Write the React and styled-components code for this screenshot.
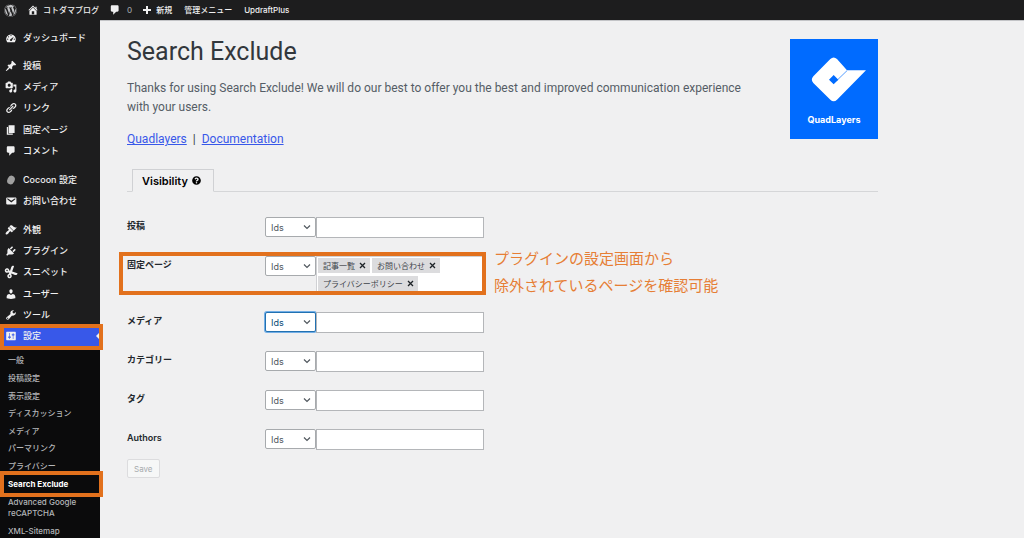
import { useState } from "react";
import styled, { createGlobalStyle } from "styled-components";
import { FaWordpress, FaCut, FaQuestionCircle } from "react-icons/fa";

const GlobalStyle = createGlobalStyle`
  * {
    box-sizing: border-box;
  }
  body {
    margin: 0;
    background-color: #f0f0f1;
    color: #3c434a;
    font-family: Inter, "Noto Sans CJK JP", sans-serif;
    overflow: hidden;
  }
`;

const Page = styled.div`
  width: 100%;
  height: 100vh;
  display: flex;
  flex-direction: column;
`;

const AdminBar = styled.nav`
  flex: none;
  height: 20px;
  display: flex;
  align-items: center;
  gap: 10px;
  padding: 0 4px;
  background-color: #1d1d1e;
`;

const BarLink = styled.a`
  display: flex;
  align-items: center;
  gap: 4px;
  padding-left: ${({ $plain }) => ($plain ? 2 : 0)}px;
  color: #f0f0f1;
  font-size: 8px;
  font-weight: 500;
  line-height: 12px;
  text-decoration: none;
  white-space: nowrap;
`;

const BarCount = styled.span`
  padding-left: 2px;
  color: #9a9ca0;
`;

const Body = styled.div`
  flex: 1;
  min-height: 0;
  display: flex;
`;

const SideBar = styled.nav`
  flex: none;
  width: 100px;
  display: flex;
  flex-direction: column;
  gap: 7px;
  padding-top: 7px;
  background-color: #1d1d1e;
`;

const MenuGroup = styled.div`
  flex: none;
  display: grid;
  grid-auto-rows: 1fr;
  min-height: ${({ $height }) => $height}px;
`;

const MenuLink = styled.a`
  position: relative;
  display: flex;
  align-items: center;
  gap: 6px;
  padding-left: 5px;
  background-color: ${({ $current }) => ($current ? "#3858e9" : "transparent")};
  color: #f0f0f1;
  font-size: 9px;
  font-weight: 500;
  line-height: 12px;
  text-decoration: none;
  white-space: nowrap;
`;

const CurrentArrow = styled.span`
  position: absolute;
  right: 0;
  border: 4px solid transparent;
  border-right-color: #f0f0f1;
`;

/* オレンジの強調枠 */
const Marker = styled.span`
  position: absolute;
  z-index: 2;
  border: 4px solid #e2711d;
  pointer-events: none;
`;

const MenuMarker = styled(Marker)`
  inset: -2px -3px -3px 0;
`;

const SubMarker = styled(Marker)`
  inset: -4px -3px -4px 0;
`;

const RowMarker = styled(Marker)`
  inset: 5px -2px 8px -8px;
`;

const SubMenu = styled.div`
  flex: 1;
  margin-top: -7px;
  padding-top: 5px;
  background-color: #0b0b0c;
`;

const SubLink = styled.a`
  position: relative;
  display: flex;
  align-items: center;
  padding: 0 8px;
  color: ${({ $current }) => ($current ? "#ffffff" : "#b4b6b9")};
  font-size: 8px;
  font-weight: ${({ $current }) => ($current ? 700 : 500)};
  line-height: 11px;
  text-decoration: none;
`;

const SubTail = styled.div`
  display: grid;
  gap: 7px;
  padding-top: 4px;
`;

const Content = styled.main`
  flex: 1;
  min-width: 0;
  padding: 18px 27px;
  border-top: 1px solid #c3c4c7;
`;

const Wrap = styled.div`
  width: 100%;
  max-width: 751px;
`;

const Header = styled.header`
  display: flex;
  justify-content: space-between;
  align-items: flex-start;
  min-height: 130px;
  font-family: Roboto, "Noto Sans CJK JP", sans-serif;
`;

const Intro = styled.div`
  max-width: 620px;
`;

const Title = styled.h1`
  margin: 0;
  color: #32373c;
  font-size: 25px;
  font-weight: 400;
  line-height: 26px;
`;

const Description = styled.p`
  margin: 14px 0 12px;
  color: #555d66;
  font-size: 12px;
  line-height: 19px;
`;

const Links = styled.div`
  display: flex;
  gap: 6px;
  font-size: 12px;
  line-height: 20px;
  a {
    color: #3858e9;
  }
`;

const Brand = styled.a`
  flex: none;
  width: 88px;
  height: 100px;
  display: flex;
  flex-direction: column;
  align-items: center;
  gap: 6px;
  background-color: #006bff;
  color: #ffffff;
  font-family: Inter, sans-serif;
  font-size: 9px;
  font-weight: 700;
  line-height: 12px;
  text-decoration: none;
  svg {
    width: 88px;
    height: 69px;
  }
`;

const TabBar = styled.div`
  display: flex;
  padding-left: 5px;
  border-bottom: 1px solid #d5d6d8;
`;

const Tab = styled.button`
  display: flex;
  align-items: center;
  gap: 4px;
  height: 23px;
  margin-bottom: -1px;
  padding: 0 12px 0 9px;
  border: 1px solid #d0d1d4;
  border-bottom-color: #f0f0f1;
  background-color: #f0f0f1;
  color: #000000;
  font-family: inherit;
  font-size: 11px;
  font-weight: 600;
`;

const Form = styled.form`
  padding-top: 16px;
`;

const Row = styled.div`
  position: relative;
  display: flex;
  align-items: flex-start;
  width: 357px;
  padding: 9px 0;
`;

const RowLabel = styled.label`
  width: 138px;
  padding-top: 3px;
  color: #23282d;
  font-size: 9px;
  font-weight: 600;
  line-height: 12px;
`;

const SelectBox = styled.div`
  display: grid;
  align-items: center;
  width: 51px;
  height: 20px;
  > * {
    grid-area: 1 / 1;
  }
  svg {
    justify-self: end;
    margin-right: 4px;
    pointer-events: none;
  }
`;

const Select = styled.select`
  appearance: none;
  width: 100%;
  height: 20px;
  padding: 0 5px;
  border: 1px solid #a7aaad;
  border-radius: 2px;
  outline: none;
  background-color: #ffffff;
  color: #50575e;
  font-family: inherit;
  font-size: 9px;
  ${({ $active }) =>
    $active &&
    `
    border-color: #2271b1;
    box-shadow: 0 0 0 1px #72aee6;
    color: #0a4b78;
  `}
`;

const IdField = styled.input`
  flex: 1;
  min-width: 0;
  height: 21px;
  padding: 0 4px;
  border: 1px solid #b4b6b9;
  outline: none;
  background-color: #ffffff;
  font-family: inherit;
  font-size: 9px;
`;

const TagField = styled.div`
  flex: 1;
  min-height: 38px;
  display: flex;
  flex-wrap: wrap;
  gap: 2px;
  padding: 1px;
  border: 1px solid #d0d1d4;
  background-color: #ffffff;
`;

const Tag = styled.span`
  display: flex;
  align-items: center;
  gap: 4px;
  height: 15px;
  padding: 0 4px 0 5px;
  background-color: #dcdcde;
  color: #3c434a;
  font-size: 8px;
`;

const TagRemove = styled.button`
  display: flex;
  padding: 0;
  border: 0;
  background: none;
  color: #1d2327;
`;

const Note = styled.p`
  position: absolute;
  left: calc(100% + 10px);
  top: -2px;
  margin: 0;
  color: #e67e35;
  font-size: 15px;
  line-height: 27px;
  white-space: nowrap;
`;

const SaveButton = styled.button`
  display: block;
  height: 19px;
  padding: 0 6px;
  border: 1px solid #dcdcde;
  border-radius: 2px;
  background-color: #f6f7f7;
  color: #a7aaad;
  font-family: inherit;
  font-size: 8px;
`;

const PATHS = {
  home: "M16 8.5l1.53 1.53-1.06 1.06L10 4.6l-6.47 6.49-1.06-1.06L10 2.5l4 4v-2h2v4zm-6-2.46l6 5.99V18H4v-5.97zM12 17v-5H8v5h4z",
  plus: "M8 2h4v6h6v4h-6v6H8v-6H2V8h6z",
  dashboard:
    "M3.76 17h12.48c1.1-1.37 1.76-3.11 1.76-5 0-4.42-3.58-8-8-8s-8 3.58-8 8c0 1.89.66 3.63 1.76 5zM9 6a1 1 0 1 1 2 0 1 1 0 0 1-2 0zM5 8a1 1 0 1 1 2 0 1 1 0 0 1-2 0zM3.500 12a1 1 0 1 1 2 0 1 1 0 0 1-2 0zM14.500 12a1 1 0 1 1 2 0 1 1 0 0 1-2 0zM8.100 13.500c0-.6.4-1.200.9-1.500l5.600-4.200-3.100 6.200c-.3.700-.9 1-1.600 1-1 0-1.800-.6-1.800-1.500z",
  pin: "M10.44 3.02l1.82-1.82 6.36 6.35-1.83 1.82c-1.05-.68-2.48-.57-3.41.36l-.75.75c-.92.93-1.04 2.35-.35 3.41l-1.83 1.82-2.41-2.41-2.8 2.79c-.42.42-3.38 2.71-3.8 2.29s1.86-3.39 2.28-3.81l2.79-2.79L4.1 9.36l1.83-1.82c1.05.69 2.48.57 3.4-.36l.75-.75c.93-.92 1.05-2.35.36-3.41z",
  media:
    "M13 11V4c0-.55-.45-1-1-1h-1.67L9 1H5L3.67 3H2c-.55 0-1 .45-1 1v7c0 .55.45 1 1 1h10c.55 0 1-.45 1-1zM7 4.5c1.38 0 2.5 1.12 2.5 2.5S8.38 9.5 7 9.5 4.5 8.38 4.5 7 5.62 4.5 7 4.5zM14 6h5v10.5c0 1.38-1.12 2.5-2.5 2.5S14 17.88 14 16.5s1.12-2.5 2.5-2.5c.17 0 .34.02.5.05V9h-3V6zm-4 8.05V13h2v3.5c0 1.38-1.12 2.5-2.5 2.5S7 17.88 7 16.5 8.12 14 9.5 14c.17 0 .34.02.5.05z",
  link: "M17.74 2.76c1.68 1.69 1.68 4.41 0 6.1l-1.53 1.52c-1.12 1.12-2.7 1.47-4.14 1.09l2.62-2.61.76-.77.76-.76c.84-.84.84-2.2 0-3.04-.84-.85-2.2-.85-3.04 0l-.77.76-3.38 3.38c-.37-1.44-.02-3.02 1.1-4.14l1.52-1.53c1.69-1.68 4.42-1.68 6.1 0zM8.59 13.43l5.34-5.34c.42-.42.42-1.1 0-1.52-.44-.43-1.13-.39-1.53 0l-5.33 5.34c-.42.42-.42 1.1 0 1.52.44.43 1.13.39 1.52 0zm-.76 2.29l4.14-4.15c.38 1.44.03 3.02-1.09 4.14l-1.52 1.53c-1.69 1.68-4.41 1.68-6.1 0-1.68-1.68-1.68-4.42 0-6.1l1.53-1.52c1.12-1.12 2.7-1.47 4.14-1.1l-4.14 4.15c-.85.84-.85 2.2 0 3.05.84.84 2.2.84 3.04 0z",
  page: "M6 15V2h10v13H6zm-1 1h8v2H3V5h2v11z",
  comment:
    "M5 2h9c1.1 0 2 .9 2 2v7c0 1.1-.9 2-2 2h-2l-5 5v-5H5c-1.1 0-2-.9-2-2V4c0-1.1.9-2 2-2z",
  mail: "M3.87 4h13.25C18.37 4 19 4.59 19 5.79v8.42c0 1.19-.63 1.79-1.88 1.79H3.87c-1.25 0-1.88-.6-1.88-1.79V5.79c0-1.2.63-1.79 1.88-1.79zm6.62 8.6l6.74-5.53c.24-.2.43-.66.13-1.07-.29-.41-.82-.42-1.17-.17l-5.7 3.86L4.8 5.83c-.35-.25-.88-.24-1.17.17-.3.41-.11.87.13 1.07z",
  brush:
    "M14.48 11.06L7.41 3.99l1.5-1.5c.5-.56 2.3-.47 3.51.32 1.21.8 1.43 1.28 2.91 2.1 1.18.64 2.45 1.26 4.45.85zm-.71.71L6.7 4.7 4.93 6.47c-.39.39-.39 1.02 0 1.41l1.06 1.06c.39.39.39 1.03 0 1.42-.6.6-1.43 1.11-2.21 1.69-.35.26-.7.53-1.01.84C1.43 14.23.4 16.08 1.4 17.07c.99 1 2.84-.03 4.18-1.36.31-.31.58-.66.85-1.02.57-.78 1.08-1.61 1.69-2.21.39-.39 1.02-.39 1.41 0l1.06 1.06c.39.39 1.02.39 1.41 0z",
  plug: "M13.11 4.36L9.87 7.6 8 5.73l3.24-3.24c.35-.34 1.05-.2 1.56.32.52.51.66 1.21.31 1.55zm-8 1.77l.91-1.12 9.01 9.01-1.19.84c-.71.71-2.63 1.16-3.82 1.16H6.14L4.9 17.26c-.59.59-1.54.59-2.12 0-.59-.58-.59-1.53 0-2.12l1.24-1.24v-3.88c0-1.13.4-3.19 1.09-3.89zm7.26 3.97l3.24-3.24c.34-.35 1.04-.21 1.55.31.52.51.66 1.21.31 1.55l-3.24 3.25z",
  user: "M10 9.25c-2.27 0-2.73-3.44-2.73-3.44C7 4.02 7.82 2 9.97 2c2.16 0 2.98 2.02 2.71 3.81 0 0-.41 3.44-2.68 3.44zm0 2.57L12.72 10c2.39 0 4.52 2.33 4.52 4.53v2.49s-3.65 1.13-7.24 1.13c-3.65 0-7.24-1.13-7.24-1.13v-2.49c0-2.25 1.94-4.48 4.47-4.48z",
  wrench:
    "M16.68 9.77c-1.34 1.34-3.3 1.67-4.95.99l-5.41 6.52c-.99.99-2.59.99-3.58 0s-.99-2.59 0-3.57l6.52-5.42c-.68-1.65-.35-3.61.99-4.95 1.28-1.28 3.12-1.62 4.72-1.06l-2.89 2.89 2.82 2.82 2.86-2.87c.53 1.58.18 3.39-1.08 4.65zM3.81 16.21c.4.39 1.04.39 1.43 0 .4-.4.4-1.04 0-1.43-.39-.4-1.03-.4-1.43 0-.39.39-.39 1.03 0 1.43z",
  settings:
    "M18 16V4c0-.55-.45-1-1-1H3c-.55 0-1 .45-1 1v12c0 .55.45 1 1 1h14c.55 0 1-.45 1-1zM8 11h1c.55 0 1 .45 1 1s-.45 1-1 1H8v1.5c0 .28-.22.5-.5.5s-.5-.22-.5-.5V13H6c-.55 0-1-.45-1-1s.45-1 1-1h1V5.5c0-.28.22-.5.5-.5s.5.22.5.5V11zm5-2h-1c-.55 0-1-.45-1-1s.45-1 1-1h1V5.5c0-.28.22-.5.5-.5s.5.22.5.5V7h1c.55 0 1 .45 1 1s-.45 1-1 1h-1v5.5c0 .28-.22.5-.5.5s-.5-.22-.5-.5V9z",
};

const Icon = ({ name, size = 12 }) => {
  if (name === "cut") {
    return <FaCut size={size} transform="rotate(-25)" />;
  }
  if (name === "cocoon") {
    return (
      <svg width={size} height={size} viewBox="0 0 20 20" aria-hidden="true">
        <ellipse cx="10" cy="10" rx="6" ry="7.5" fill="#a0a0a0" transform="rotate(25 10 10)" />
      </svg>
    );
  }
  return (
    <svg width={size} height={size} viewBox="0 0 20 20" fill="currentColor" fillRule="evenodd" aria-hidden="true">
      <path d={PATHS[name]} />
    </svg>
  );
};

const menuGroups = [
  { height: 21, items: [["dashboard", "ダッシュボード"]] },
  {
    height: 107,
    items: [
      ["pin", "投稿"],
      ["media", "メディア"],
      ["link", "リンク"],
      ["page", "固定ページ"],
      ["comment", "コメント"],
    ],
  },
  {
    height: 43,
    items: [
      ["cocoon", "Cocoon 設定"],
      ["mail", "お問い合わせ"],
    ],
  },
  {
    height: 128,
    items: [
      ["brush", "外観"],
      ["plug", "プラグイン"],
      ["cut", "スニペット"],
      ["user", "ユーザー"],
      ["wrench", "ツール"],
      ["settings", "設定"],
    ],
  },
];

const subItems = [
  "一般",
  "投稿設定",
  "表示設定",
  "ディスカッション",
  "メディア",
  "パーマリンク",
  "プライバシー",
  "Search Exclude",
];

const fields = [
  { id: "post", label: "投稿" },
  { id: "page", label: "固定ページ", marked: true },
  { id: "media", label: "メディア" },
  { id: "category", label: "カテゴリー" },
  { id: "tag", label: "タグ" },
  { id: "authors", label: "Authors" },
];

const SideMenu = () => (
  <SideBar>
    {menuGroups.map((group) => (
      <MenuGroup key={group.items[0][1]} $height={group.height}>
        {group.items.map(([icon, label]) => {
          const current = label === "設定";
          return (
            <MenuLink key={label} href="#" $current={current}>
              <Icon name={icon} />
              {label}
              {current && <CurrentArrow />}
              {current && <MenuMarker />}
            </MenuLink>
          );
        })}
      </MenuGroup>
    ))}
    <SubMenu>
      <MenuGroup $height={141}>
        {subItems.map((label) => {
          const current = label === "Search Exclude";
          return (
            <SubLink key={label} href="#" $current={current}>
              {label}
              {current && <SubMarker />}
            </SubLink>
          );
        })}
      </MenuGroup>
      <SubTail>
        <SubLink href="#">Advanced Google reCAPTCHA</SubLink>
        <SubLink href="#">XML-Sitemap</SubLink>
      </SubTail>
    </SubMenu>
  </SideBar>
);

const SettingRow = ({ field, tags, onRemove, active, onFocus }) => (
  <Row>
    <RowLabel htmlFor={field.id}>{field.label}</RowLabel>
    <SelectBox>
      <Select id={field.id} $active={active} onFocus={onFocus}>
        <option>Ids</option>
      </Select>
      <svg width="10" height="10" viewBox="0 0 10 10" fill="none" stroke="#50575e" aria-hidden="true">
        <path d="M2 3.500l3 3 3-3" strokeWidth="1.200" />
      </svg>
    </SelectBox>
    {field.marked ? (
      <TagField>
        {tags.map((tag) => (
          <Tag key={tag}>
            {tag}
            <TagRemove type="button" aria-label={`${tag} を削除`} onClick={() => onRemove(tag)}>
              <svg width="7" height="7" viewBox="0 0 7 7" stroke="currentColor" aria-hidden="true">
                <path d="M1 1l5 5M6 1l-5 5" strokeWidth="1.300" />
              </svg>
            </TagRemove>
          </Tag>
        ))}
      </TagField>
    ) : (
      <IdField type="text" aria-label={`${field.label} Ids`} />
    )}
    {field.marked && (
      <>
        <RowMarker />
        <Note>
          プラグインの設定画面から
          <br />
          除外されているページを確認可能
        </Note>
      </>
    )}
  </Row>
);

const App = () => {
  const [focused, setFocused] = useState("media");
  const [tags, setTags] = useState(["記事一覧", "お問い合わせ", "プライバシーポリシー"]);

  const removeTag = (name) => {
    setTags(tags.filter((tag) => tag !== name));
  };

  return (
    <Page>
      <GlobalStyle />
      <AdminBar>
        <BarLink href="#" aria-label="WordPress">
          <FaWordpress size={13} color="#c3c4c7" />
        </BarLink>
        <BarLink href="#">
          <Icon name="home" size={12} />
          コトダマブログ
        </BarLink>
        <BarLink href="#">
          <Icon name="comment" size={12} />
          <BarCount>0</BarCount>
        </BarLink>
        <BarLink href="#">
          <Icon name="plus" size={10} />
          新規
        </BarLink>
        <BarLink href="#" $plain>
          管理メニュー
        </BarLink>
        <BarLink href="#" $plain>
          UpdraftPlus
        </BarLink>
      </AdminBar>
      <Body>
        <SideMenu />
        <Content>
          <Wrap>
            <Header>
              <Intro>
                <Title>Search Exclude</Title>
                <Description>
                  Thanks for using Search Exclude! We will do our best to offer you the best and
                  improved communication experience with your users.
                </Description>
                <Links>
                  <a href="#">Quadlayers</a>
                  <span>|</span>
                  <a href="#">Documentation</a>
                </Links>
              </Intro>
              <Brand href="#">
                <svg viewBox="0 0 264 207" aria-hidden="true">
                  <path
                    fill="#ffffff"
                    fillRule="evenodd"
                    d="M121 60q10-9 20 0l30 34h57l-87 88q-10 9-20 0l-51-50q-9-10 0-20zM131 108l-14 14 14 14 14-14z"
                  />
                  <path d="M142 123l29-28" stroke="#006bff" strokeWidth="2" />
                </svg>
                QuadLayers
              </Brand>
            </Header>
            <TabBar>
              <Tab type="button">
                Visibility
                <FaQuestionCircle size={9} />
              </Tab>
            </TabBar>
            <Form onSubmit={(e) => e.preventDefault()}>
              {fields.map((field) => (
                <SettingRow
                  key={field.id}
                  field={field}
                  tags={tags}
                  onRemove={removeTag}
                  active={focused === field.id}
                  onFocus={() => setFocused(field.id)}
                />
              ))}
              <SaveButton type="submit" disabled>
                Save
              </SaveButton>
            </Form>
          </Wrap>
        </Content>
      </Body>
    </Page>
  );
};

export default App;
